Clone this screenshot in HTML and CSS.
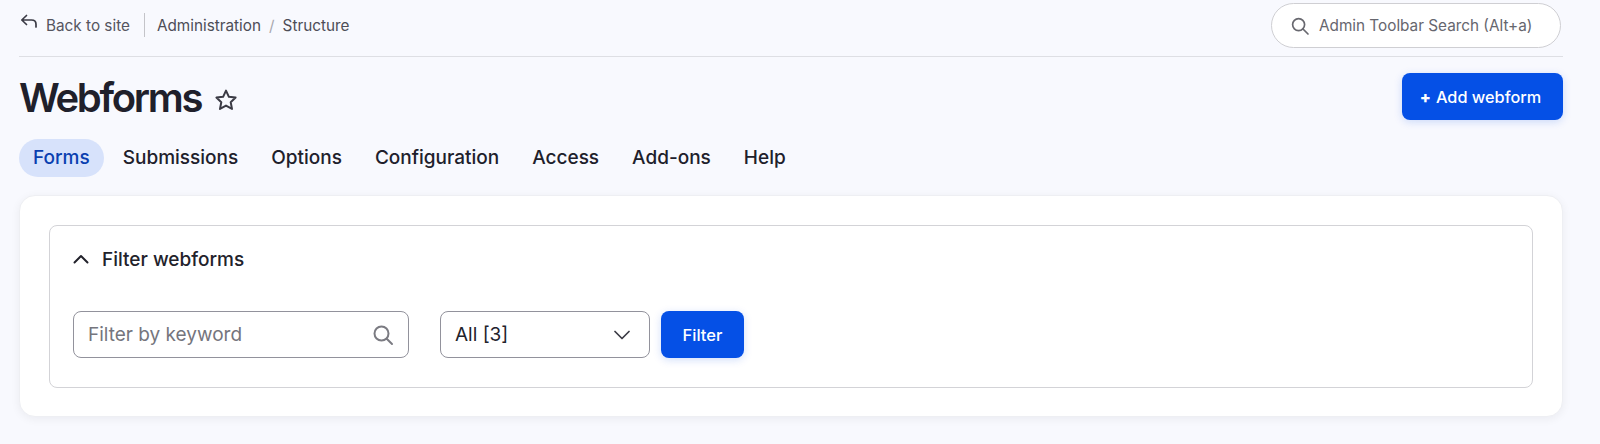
FILE: index.html
```html
<!DOCTYPE html>
<html lang="en">
<head>
<meta charset="utf-8">
<title>Webforms</title>
<link rel="stylesheet" href="styles.css">
</head>
<body>
<div class="page">
  <header class="topbar">
    <div class="crumbs">
      <a class="back"><svg class="back-icon" width="18" height="16" viewBox="0 0 18 16"><path d="M6.5 1.5 L1.8 6 L6.5 10.5 M2 6 H11.5 C14.5 6 16 7.6 16 10.2 V13" fill="none" stroke="#3b3b45" stroke-width="1.7" stroke-linecap="round" stroke-linejoin="round"/></svg>Back to site</a>
      <span class="vsep"></span>
      <a class="crumb">Administration</a>
      <span class="slash">/</span>
      <a class="crumb">Structure</a>
    </div>
    <div class="tsearch">
      <svg width="20" height="20" viewBox="0 0 20 20"><circle cx="8.6" cy="8.6" r="6" fill="none" stroke="#68686f" stroke-width="1.7"/><path d="M13 13 L18 18" stroke="#68686f" stroke-width="1.7" stroke-linecap="round"/></svg>
      <span>Admin Toolbar Search (Alt+a)</span>
    </div>
  </header>
  <div class="titlerow">
    <div class="titlewrap">
      <h1>Webforms</h1>
      <svg class="star" width="24" height="24" viewBox="0 0 24 24"><path d="M12 2.6 L14.9 8.8 L21.6 9.6 L16.7 14.2 L18 20.9 L12 17.6 L6 20.9 L7.3 14.2 L2.4 9.6 L9.1 8.8 Z" fill="none" stroke="#3b3b45" stroke-width="2" stroke-linejoin="round"/></svg>
    </div>
    <a class="btn btn-add"><span class="plus">+</span> Add webform</a>
  </div>
  <nav class="tabs">
    <a class="tab active">Forms</a>
    <a class="tab">Submissions</a>
    <a class="tab">Options</a>
    <a class="tab">Configuration</a>
    <a class="tab">Access</a>
    <a class="tab">Add-ons</a>
    <a class="tab">Help</a>
  </nav>
  <main class="card">
    <section class="details">
      <div class="summary">
        <svg width="16" height="10" viewBox="0 0 16 10"><path d="M1.5 8.5 L8 2 L14.5 8.5" fill="none" stroke="#22222b" stroke-width="2" stroke-linecap="round" stroke-linejoin="round"/></svg>
        <span>Filter webforms</span>
      </div>
      <div class="filters">
        <div class="field keyword">
          <span>Filter by keyword</span>
          <svg width="22" height="22" viewBox="0 0 22 22"><circle cx="9.5" cy="9.5" r="7" fill="none" stroke="#7b7b82" stroke-width="2"/><path d="M14.7 14.7 L20 20" stroke="#7b7b82" stroke-width="2" stroke-linecap="round"/></svg>
        </div>
        <div class="field select">
          <span>All [3]</span>
          <svg width="16" height="10" viewBox="0 0 16 10"><path d="M1 1.5 L8 8.5 L15 1.5" fill="none" stroke="#3b3b45" stroke-width="1.7" stroke-linecap="round" stroke-linejoin="round"/></svg>
        </div>
        <a class="btn btn-filter">Filter</a>
      </div>
    </section>
  </main>
</div>
</body>
</html>
```
FILE: styles.css
```css
* { box-sizing: border-box; }
html, body { margin: 0; padding: 0; height: 444px; overflow: hidden; }
body { background: #f8f9fe; font-family: Inter, "Liberation Sans", sans-serif; color: #22222b; }
.page { padding: 0 37px 0 19px; }
.topbar { height: 57px; display: flex; justify-content: space-between; align-items: flex-start; border-bottom: 1px solid #dedfe4; }
.crumbs { display: flex; align-items: center; height: 50px; font-size: 15.3px; color: #55555f; }
.back { display: flex; align-items: center; gap: 8px; }
.back-icon { margin-top: -6px; margin-left: 1px; }
.vsep { width: 1px; height: 24px; background: #c4c4c9; margin: 0 12px 0 14px; }
.crumb { color: #4d4d57; }
.slash { margin: 0 8px; color: #a8a8ae; }
.tsearch { width: 290px; height: 45px; margin-top: 3px; margin-right: 2px; display: flex; align-items: center; gap: 9px; padding-left: 18px; background: #fff; border: 1px solid #cfcfd3; border-radius: 23px; font-size: 15.3px; color: #66666e; }
.titlerow { display: flex; justify-content: space-between; align-items: center; height: 82px; }
.titlewrap { display: flex; align-items: center; gap: 13px; }
h1 { margin: 0; font-size: 40px; font-weight: 600; letter-spacing: -2.3px; line-height: 48px; color: #20202b; }
.star { margin-top: 3px; }
.btn { display: flex; align-items: center; justify-content: center; background: #0550e6; color: #fff; font-weight: 500; border-radius: 8px; box-shadow: 0 2px 8px rgba(5, 80, 230, 0.18); }
.btn-add { width: 161px; height: 47px; margin-top: -3px; padding-right: 4px; font-size: 16.3px; gap: 5px; }
.plus { font-weight: 800; }
.tabs { display: flex; gap: 0; height: 38px; align-items: center; margin-top: 0; }
.tab { height: 38px; line-height: 38px; padding: 0 15px; margin-right: 3px; font-size: 19px; font-weight: 500; color: #20202b; border-radius: 19px; }
.tab.active { background: #d7e2fb; color: #0a3fb0; padding: 0 14px; margin-right: 4px; }
.card { margin-top: 18px; height: 222px; padding: 29px; background: #fff; border-radius: 16px; border: 1px solid #eeeff3; box-shadow: 0 2px 10px rgba(0, 0, 30, 0.06); }
.details { height: 163px; border: 1px solid #d3d3d7; border-radius: 8px; padding: 0 23px; }
.summary { height: 66px; display: flex; align-items: center; gap: 13px; font-size: 19px; font-weight: 500; color: #22222b; }
.filters { display: flex; align-items: flex-start; margin-top: 19px; }
.field { height: 47px; display: flex; align-items: center; justify-content: space-between; background: #fff; border: 1px solid #92929c; border-radius: 8px; font-size: 19px; padding: 0 14px; }
.keyword { width: 336px; margin-right: 31px; color: #75757d; padding-right: 14px; }
.select { width: 210px; margin-right: 11px; color: #22222b; padding-right: 19px; }
.btn-filter { width: 83px; height: 47px; font-size: 16.5px; }
```
